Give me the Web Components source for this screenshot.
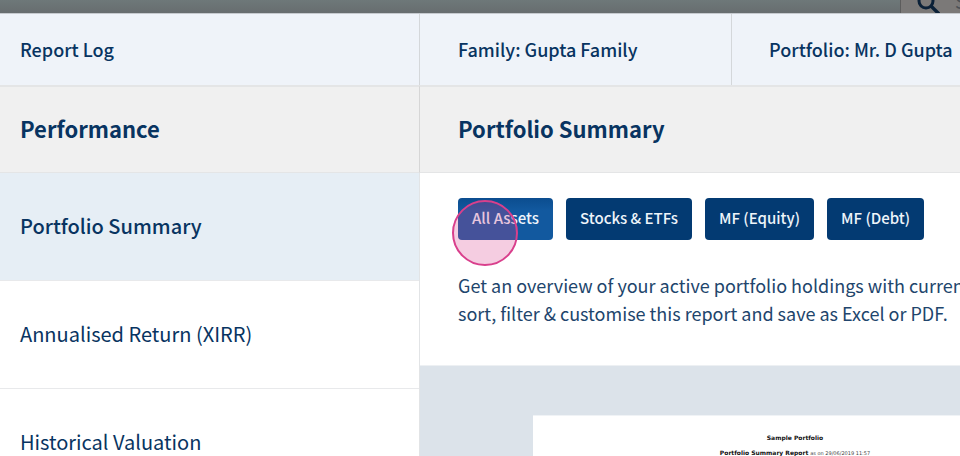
<!DOCTYPE html>
<html lang="en">
<head>
<meta charset="utf-8">
<title>Portfolio Summary</title>
<style>
html, body { margin: 0; height: 100%; overflow: hidden; }
body { font-family: "Noto Sans CJK SC", "Noto Sans", sans-serif; color: #083461; background: #fff; }
</style>
</head>
<body>
<report-app></report-app>

<script>
const define = (name, html) => customElements.define(name, class extends HTMLElement {
  constructor() {
    super();
    const t = document.createElement('template');
    t.innerHTML = html;
    this.attachShadow({ mode: 'open' }).append(t.content.cloneNode(true));
  }
});

define('page-backdrop', `
<style>
:host { display: flex; flex: none; justify-content: flex-end; height: 13px; overflow: hidden; background: linear-gradient(#6e7879, #676d6f); }
label { display: flex; align-items: flex-end; box-sizing: border-box; width: 60px; padding-left: 15px; gap: 15px; border-left: 1px solid #5c5c5c; background: #7b7978; overflow: hidden; }
svg { flex: none; width: 24px; height: 24px; }
input { flex: none; width: 160px; height: 24px; padding: 0; border: 0; background: none; font: 18px/24px "Noto Sans CJK SC", sans-serif; }
input::placeholder { color: #4b4f55; }
</style>
<label>
  <svg viewBox="0 0 24 24" fill="none" stroke="#0b2138" aria-hidden="true"><circle cx="10" cy="12" r="7" stroke-width="3"/><path d="M15 17l8 8" stroke-width="3.4"/></svg>
  <input type="search" placeholder="Search" aria-label="Search">
</label>`);

define('header-cell', `
<style>
:host { display: block; box-sizing: border-box; padding: 21px 0 22px 38px; border-right: 1px solid #d4d7da; font-size: 18px; line-height: 28px; font-weight: 500; white-space: nowrap; overflow: hidden; }
:host([first]) { padding-left: 20px; }
:host([last]) { border-right: 0; padding-left: 37px; }
</style><slot></slot>`);

define('section-title', `
<style>
:host { display: block; flex: none; box-sizing: border-box; padding: 25px 0 28px 38px; background: #f0f0f0; border-top: 2px solid #e4e5e6; border-bottom: 1px solid #e4e5e6; white-space: nowrap; overflow: hidden; }
:host([side]) { padding-left: 20px; border-right: 1px solid #d6d6d6; }
h2 { margin: 0; font-size: 22px; line-height: 32px; font-weight: 700; }
</style><h2><slot></slot></h2>`);

define('nav-item', `
<style>
:host { display: block; border-bottom: 1px solid #e8e9eb; }
a { display: block; padding: 37px 20px 38px; font-size: 20px; line-height: 32px; color: inherit; text-decoration: none; white-space: nowrap; }
:host([active]) a { background: #e6eef5; font-weight: 500; }
</style><a href="#"><slot></slot></a>`);

define('asset-button', `
<style>
:host { display: block; }
button { display: block; padding: 6px 14px 8px; border: 0; border-radius: 4px; background: #033a72; color: #eef4fa; font-family: inherit; font-size: 15px; line-height: 28px; font-weight: 500; white-space: nowrap; }
:host([active]) button { background: linear-gradient(#0b4d8f, #12599f 30%); }
</style><button type="button"><slot></slot></button>`);

define('tap-marker', `
<style>
:host { display: block; box-sizing: border-box; width: 66px; height: 66px; border: 2px solid #d93f8c; border-radius: 50%; background: rgba(217, 63, 140, .26); pointer-events: none; }
</style>`);

define('report-preview', `
<style>
:host { display: block; padding: 49px 0 0 113px; background: #dce3ea; overflow: hidden; }
article { min-width: 524px; min-height: 100%; box-sizing: border-box; padding-top: 17px; background: #fff; color: #111; text-align: center; font-family: "DejaVu Sans", sans-serif; border-top: 1px solid #f0f3f6; }
p { margin: 0 0 5px; font-size: 6px; line-height: 10px; }
small { font-size: 5px; color: #444; }
</style>
<article><p><b>Sample Portfolio</b></p><p><b>Portfolio Summary Report</b> <small>as on 29/06/2019 11:57</small></p></article>`);

define('report-app', `
<style>
:host { display: flex; flex-direction: column; height: 100vh; overflow: hidden; }
header { flex: none; display: grid; grid-template-columns: 420fr 312fr 228fr; background: #eff3f9; border-top: 1px solid #c6cacf; }
.body { flex: 1; min-height: 0; display: grid; grid-template-columns: 7fr 9fr; }
.side, main { display: flex; flex-direction: column; min-width: 0; min-height: 0; overflow: hidden; }
nav { flex: 1; border-right: 1px solid #e2e4e6; }
.intro { flex: none; padding: 25px 0 38px 38px; border-bottom: 1px solid #edf0f3; }
.buttons { position: relative; display: flex; gap: 13px; }
tap-marker { position: absolute; left: -6px; top: 2px; }
p { margin: 31px 0 0; font-size: 18px; line-height: 28px; color: #21456c; white-space: nowrap; }
report-preview { flex: 1; }
</style>
<page-backdrop></page-backdrop>
<header>
  <header-cell first>Report Log</header-cell>
  <header-cell>Family: Gupta Family</header-cell>
  <header-cell last>Portfolio: Mr. D Gupta</header-cell>
</header>
<div class="body">
  <div class="side">
    <section-title side>Performance</section-title>
    <nav>
      <nav-item active>Portfolio Summary</nav-item>
      <nav-item>Annualised Return (XIRR)</nav-item>
      <nav-item>Historical Valuation</nav-item>
    </nav>
  </div>
  <main>
    <section-title>Portfolio Summary</section-title>
    <section class="intro">
      <div class="buttons">
        <asset-button active>All Assets</asset-button>
        <asset-button>Stocks &amp; ETFs</asset-button>
        <asset-button>MF (Equity)</asset-button>
        <asset-button>MF (Debt)</asset-button>
        <tap-marker></tap-marker>
      </div>
      <p>Get an overview of your active portfolio holdings with current<br>sort, filter &amp; customise this report and save as Excel or PDF.</p>
    </section>
    <report-preview></report-preview>
  </main>
</div>`);
</script>
</body>
</html>
